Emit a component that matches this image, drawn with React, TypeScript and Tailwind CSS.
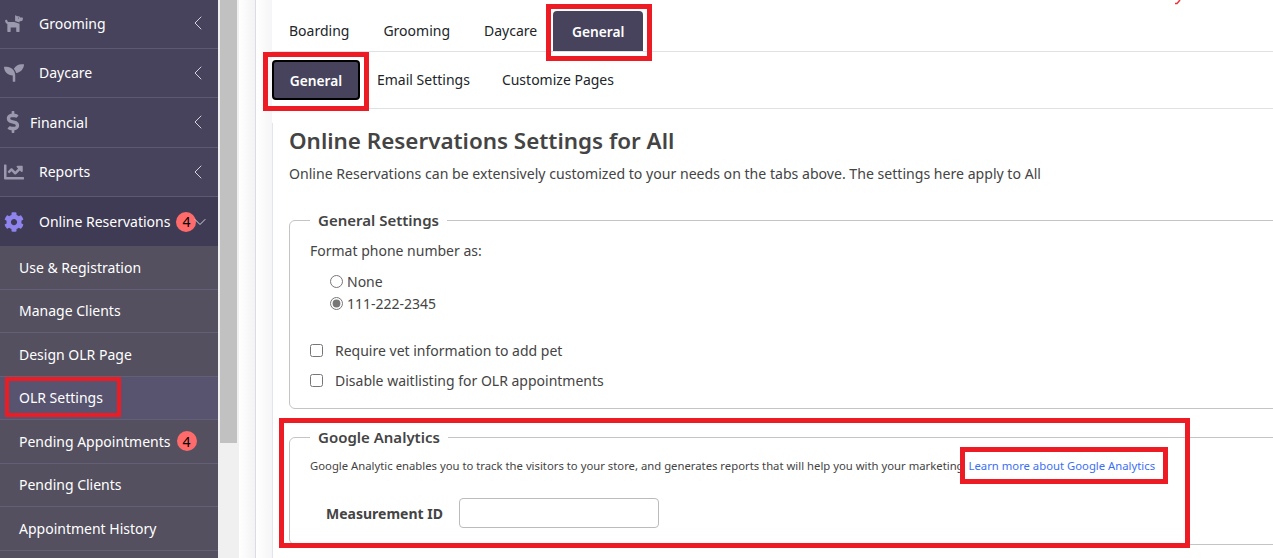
import { ChevronLeft, ChevronDown } from "lucide-react"
import { FaDog, FaSeedling, FaDollarSign, FaChartLine, FaCog } from "react-icons/fa"

const font = { fontFamily: '"Noto Sans", sans-serif' }

function MainRow({ icon, label, left = "pl-[39px]" }: { icon: React.ReactNode; label: string; left?: string }) {
  return (
    <div className={`relative flex h-[49.5px] items-center border-b border-[#5c5a70] bg-[#47435c] ${left} text-[14px] text-white`}>
      <span className="absolute left-1 flex w-5 justify-start text-[#9b99ad]">{icon}</span>
      {label}
      <ChevronLeft className="absolute left-[186px] text-[#d5d4dc]" size={24} strokeWidth={1} />
    </div>
  )
}

function SubRow({ label, active, badge }: { label: string; active?: boolean; badge?: boolean }) {
  return (
    <div className={`flex h-[43.5px] items-center border-b border-[#625f76] pl-[19px] text-[14px] text-white ${active ? "bg-[#58546f]" : "bg-[#54505f]"}`}>
      {label}
      {badge && (
        <span className="ml-1.5 flex h-5 w-5 items-center justify-center rounded-full bg-[#ff6b6b] text-[14px] text-black">4</span>
      )}
    </div>
  )
}

function Sidebar() {
  return (
    <div className="-mt-[1px] w-[218px] shrink-0 bg-[#54505f]">
      <MainRow icon={<FaDog size={20} />} label="Grooming" />
      <MainRow icon={<FaSeedling size={20} />} label="Daycare" />
      <MainRow icon={<FaDollarSign size={22} className="-ml-[2px]" />} label="Financial" left="pl-[30px]" />
      <MainRow icon={<FaChartLine size={20} />} label="Reports" />
      <div className="relative flex h-[49px] items-center bg-[#3f3b54] pl-[39px] text-[14px] text-white">
        <span className="absolute left-1 flex w-5 justify-start text-[#8f84ee]"><FaCog size={20} /></span>
        Online Reservations
        <span className="ml-1.5 flex h-5 w-5 items-center justify-center rounded-full bg-[#ff6b6b] text-[14px] text-black">4</span>
        <ChevronDown className="absolute left-[190px] text-[#d5d4dc]" size={20} strokeWidth={1.2} />
      </div>
      <SubRow label="Use & Registration" />
      <SubRow label="Manage Clients" />
      <SubRow label="Design OLR Page" />
      <SubRow label="OLR Settings" active />
      <SubRow label="Pending Appointments" badge />
      <SubRow label="Pending Clients" />
      <SubRow label="Appointment History" />
    </div>
  )
}

export default function App() {
  return (
    <div className="relative flex h-[558px] w-[1273px] overflow-hidden bg-white text-[14px] text-[#444]" style={font}>
      <Sidebar />

      {/* scrollbar */}
      <div className="h-full w-[21px] shrink-0 bg-[#f0f0f0]">
        <div className="ml-[2px] h-[443px] w-[17px] bg-[#c1c1c1]" />
      </div>

      {/* nested panel edges */}
      <div className="h-full w-[17px] shrink-0 border-r border-[#dcdce2] bg-gradient-to-r from-white to-[#f3f3f3]" />
      <div className="flex h-full min-w-0 flex-1">
        <div className="h-full w-[16px] shrink-0 bg-gradient-to-r from-white to-[#f5f5f7]" />

        <div className="min-w-0 flex-1">
          <div className="flex h-[52px] items-end border-b border-[#dee2e6] text-[#212529]">
            <span className="mb-[10px] ml-[17px]">Boarding</span>
            <span className="mb-[10px] ml-[34px]">Grooming</span>
            <span className="mb-[10px] ml-[34px]">Daycare</span>
            <span className="ml-[16px] flex h-10 w-[90px] items-center justify-center rounded-t bg-[#47435c] pt-[3px] text-[13.75px] font-semibold text-white">General</span>
          </div>

          <div className="flex h-[57px] items-start border-b border-[#dee2e6] text-[#212529]">
            <span className="mt-[8px] flex h-10 w-[88px] items-center justify-center rounded border-2 border-black bg-[#47435c] pt-[3px] text-[13.75px] font-semibold text-white">General</span>
            <span className="ml-[17px] mt-[17px]">Email Settings</span>
            <span className="ml-[32px] mt-[17px]">Customize Pages</span>
          </div>

          <div className="h-full w-[1100px] border-l border-[#e4e4ee] pl-[16px]">
            <h1 className="mt-[14px] text-[22.4px] font-semibold leading-[36px]">Online Reservations Settings for All</h1>
            <p className="mt-[4px] text-[14.1px] leading-[21px]">Online Reservations can be extensively customized to your needs on the tabs above. The settings here apply to All</p>

            <fieldset className="mt-[25px] h-[200px] rounded-md border border-[#c4c4c4] pl-[20px]">
              <legend className="px-[8px] text-[15px] font-semibold">General Settings</legend>
              <p className="mt-[8px]">Format phone number as:</p>
              <label className="ml-[20px] mt-[10px] flex h-[22px] items-center gap-[4px]">
                <input type="radio" name="phone" className="h-[13px] w-[13px]" /> None
              </label>
              <label className="ml-[20px] flex h-[22px] items-center gap-[4px]">
                <input type="radio" name="phone" defaultChecked className="h-[13px] w-[13px] accent-[#777]" /> 111-222-2345
              </label>
              <label className="mt-[25px] flex h-[22px] items-center gap-[12px]">
                <input type="checkbox" className="h-[13px] w-[13px]" /> Require vet information to add pet
              </label>
              <label className="mt-[8px] flex h-[22px] items-center gap-[12px]">
                <input type="checkbox" className="h-[13px] w-[13px]" /> Disable waitlisting for OLR appointments
              </label>
            </fieldset>

            <fieldset className="mt-[17px] h-[119px] rounded-md border border-[#c4c4c4] pl-[20px]">
              <legend className="px-[8px] text-[15px] font-semibold">Google Analytics</legend>
              <p className="mt-[9px] text-[11.3px]">
                Google Analytic enables you to track the visitors to your store, and generates reports that will help you with your marketing <a className="ml-[2px] text-[#3b6ff5]">Learn more about Google Analytics</a>
              </p>
              <div className="mt-[24px] flex items-center">
                <span className="ml-[16px] font-bold">Measurement ID</span>
                <input className="ml-[16px] h-[30px] w-[200px] rounded border border-[#bbb]" />
              </div>
            </fieldset>
          </div>
        </div>
      </div>

      {/* red callouts drawn over the screenshot */}
      <div className="absolute left-[546px] top-[4px] h-[57px] w-[106px] border-[5px] border-[#ed1c24]" />
      <div className="absolute left-[263px] top-[52px] h-[59px] w-[106px] border-[5px] border-[#ed1c24]" />
      <div className="absolute left-[5px] top-[377px] h-[40px] w-[116px] border-[4px] border-[#ed1c24]" />
      <div className="absolute left-[279px] top-[418px] h-[130px] w-[911px] border-[5px] border-[#ed1c24]" />
      <div className="absolute left-[960px] top-[447px] h-[37px] w-[208px] border-[5px] border-[#ed1c24]" />
      <svg className="absolute left-[1174px] top-0" width="8" height="5" viewBox="0 0 8 5">
        <path d="M1 3.5 L3 3.5 L6 0" stroke="#e8343c" strokeWidth="1.5" fill="none" />
      </svg>
    </div>
  )
}
